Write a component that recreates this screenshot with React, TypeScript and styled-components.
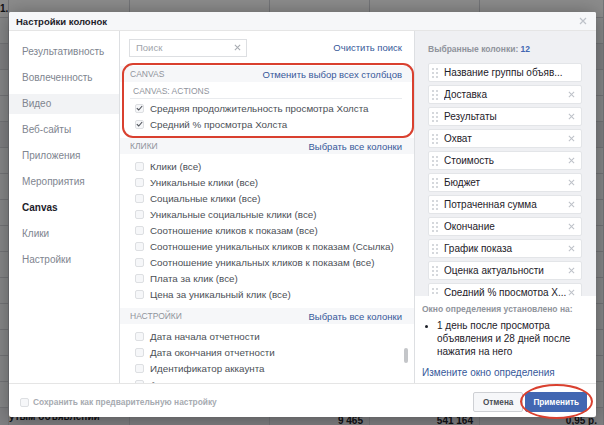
import React from 'react';
import styled, { createGlobalStyle } from 'styled-components';

const GlobalStyle = createGlobalStyle`
  html, body {
    margin: 0;
    padding: 0;
  }
  body {
    font-family: "Liberation Sans", Arial, sans-serif;
    overflow: hidden;
  }
  * {
    box-sizing: border-box;
  }
`;

const Page = styled.div`
  position: relative;
  width: 604px;
  height: 425px;
  overflow: hidden;
  background: #f6f7f9;
`;

/* --- the ads table that sits behind the dialog --- */

const BackTable = styled.div`
  display: flex;
  flex-direction: column;
`;

const BackRow = styled.div<{ $tone?: 'head' | 'dark' | 'light' }>`
  display: grid;
  grid-template-columns: 9px 121px 140px 100px 110px 124px;
  height: ${(p) => (p.$tone === 'head' ? 18 : 26)}px;
  align-items: center;
  border-bottom: 1px solid #d3d6db;
  background: ${(p) =>
    p.$tone === 'head' ? '#ffffff' : p.$tone === 'dark' ? '#e9ebee' : '#f6f7f9'};
  font-size: 10px;
  font-weight: bold;
  color: #1d2129;
`;

const BackCell = styled.div<{ $right?: boolean }>`
  padding: 0 ${(p) => (p.$right ? 6 : 0)}px;
  white-space: nowrap;
  overflow: hidden;
  text-align: ${(p) => (p.$right ? 'right' : 'left')};
  border-right: 1px solid #d3d6db;
  height: 100%;
  line-height: ${(p) => (p.$right ? 26 : 17)}px;
`;

const Dim = styled.div`
  position: absolute;
  inset: 0;
  background: rgba(0, 0, 0, 0.45);
`;

/* --- dialog --- */

const Modal = styled.div`
  position: absolute;
  left: 9px;
  top: 12px;
  width: 587px;
  height: 405px;
  background: #fff;
  display: flex;
  flex-direction: column;
  border-radius: 2px;
  box-shadow: 0 2px 20px rgba(0, 0, 0, 0.35);
`;

const Header = styled.div`
  flex: none;
  height: 19px;
  display: flex;
  align-items: center;
  justify-content: space-between;
  padding: 0 9px 0 7px;
  background: #f6f7f9;
  border-bottom: 1px solid #e5e5e5;
  border-radius: 2px 2px 0 0;
`;

const Title = styled.div`
  font-size: 9.5px;
  font-weight: bold;
  color: #1d2129;
`;

const Body = styled.div`
  flex: 1;
  min-height: 0;
  display: flex;
`;

const Sidebar = styled.div`
  flex: none;
  width: 111px;
  border-right: 1px solid #dddfe2;
  padding-top: 11px;
  display: flex;
  flex-direction: column;
  gap: 6px;
`;

const NavItem = styled.div<{ $active?: boolean; $hover?: boolean }>`
  height: 20px;
  line-height: 20px;
  padding-left: 13px;
  font-size: 10px;
  color: ${(p) => (p.$active ? '#1d2129' : '#80858f')};
  font-weight: ${(p) => (p.$active ? 'bold' : 'normal')};
  background: ${(p) => (p.$hover ? '#f2f3f5' : 'transparent')};
`;

const Middle = styled.div`
  position: relative;
  flex: none;
  width: 295px;
  overflow: hidden;
  border-right: 1px solid #dddfe2;
`;

const SearchRow = styled.div`
  height: 33px;
  display: flex;
  align-items: center;
  justify-content: space-between;
  padding: 0 12px 0 9px;
`;

const SearchBox = styled.div`
  width: 118px;
  height: 18px;
  border: 1px solid #dddfe2;
  display: flex;
  align-items: center;
  justify-content: space-between;
  padding: 0 5px 0 6px;
  font-size: 9.5px;
  color: #a0a4ab;
`;

const Link = styled.span<{ $size?: number }>`
  font-size: ${(p) => p.$size || 9.5}px;
  color: #365899;
  white-space: nowrap;
`;

const Section = styled.div<{ $marked?: boolean }>`
  position: relative;
  margin-top: 2px;
  padding-bottom: 4px;

  ${(p) =>
    p.$marked &&
    `
    &::after {
      content: '';
      position: absolute;
      left: 2px;
      right: 0px;
      top: -3px;
      bottom: -2px;
      border: 2px solid #d9402f;
      border-radius: 11px;
      pointer-events: none;
    }
  `}
`;

const SectionHead = styled.div`
  height: 16px;
  display: flex;
  align-items: center;
  justify-content: space-between;
  padding: 0 12px 0 10px;
  background: #f6f7f9;
`;

const SectionLabel = styled.span`
  font-size: 8.5px;
  color: #90949c;
  text-transform: uppercase;
`;

const SubHead = styled.div`
  height: 16px;
  display: flex;
  align-items: center;
  margin: 1px 12px 1px 10px;
  padding-left: 3px;
  border-bottom: 1px solid #e9ebee;
  font-size: 8.5px;
  color: #90949c;
`;

const Items = styled.div`
  padding-top: 4px;
  display: flex;
  flex-direction: column;
`;

const CheckRow = styled.div`
  height: 16px;
  display: flex;
  align-items: center;
  gap: 6px;
  padding-left: 15px;
  font-size: 9.8px;
  color: #4b4f56;
  white-space: nowrap;
`;

const Box = styled.span`
  flex: none;
  width: 9px;
  height: 9px;
  border: 1px solid #dddfe2;
  border-radius: 2px;
  background: #f6f7f9;
  display: flex;
  align-items: center;
  justify-content: center;
`;

const ScrollThumb = styled.div`
  position: absolute;
  right: 6px;
  top: 317px;
  width: 4px;
  height: 15px;
  border-radius: 2px;
  background: #c4c6c9;
`;

const Right = styled.div`
  flex: 1;
  display: flex;
  flex-direction: column;
  min-width: 0;
`;

const Chosen = styled.div`
  flex: none;
  height: 265px;
  overflow: hidden;
  background: #eff0f3;
  padding: 12px 14px 0 13px;
`;

const ChosenLabel = styled.div`
  font-size: 8.5px;
  font-weight: bold;
  color: #90949c;
  height: 12px;
  line-height: 12px;
  margin-bottom: 8px;

  b {
    color: #4267b2;
  }
`;

const ChosenList = styled.div`
  display: flex;
  flex-direction: column;
  gap: 3px;
`;

const ChosenItem = styled.div`
  height: 19px;
  flex: none;
  display: flex;
  align-items: center;
  background: #fff;
  border: 1px solid #e3e5e8;
  border-radius: 2px;
  padding: 0 6px 0 3px;
  font-size: 10px;
  color: #1d2129;
`;

const Handle = styled.svg`
  flex: none;
  width: 6px;
  height: 10px;
  margin-right: 6px;
`;

const ChosenText = styled.span`
  flex: 1;
  min-width: 0;
  overflow: hidden;
  white-space: nowrap;
  text-overflow: ellipsis;
`;

const Info = styled.div`
  flex: 1;
  padding: 8px 10px 0 7px;
  background: #fff;
`;

const InfoLabel = styled.div`
  font-size: 8.5px;
  font-weight: bold;
  color: #90949c;
  margin-bottom: 5px;
`;

const InfoList = styled.ul`
  margin: 0 0 4px;
  padding-left: 15px;
  font-size: 10px;
  line-height: 13px;
  color: #1d2129;

  li::marker {
    font-size: 9px;
  }
`;

const Footer = styled.div`
  flex: none;
  height: 34px;
  border-top: 1px solid #e5e5e5;
  display: flex;
  align-items: center;
  justify-content: space-between;
  padding: 3px 9px 0 11px;
`;

const SaveAsPreset = styled.div`
  display: flex;
  align-items: center;
  gap: 4px;
  font-size: 8.4px;
  font-weight: bold;
  color: #a7abb1;
`;

const Buttons = styled.div`
  display: flex;
  gap: 2px;
`;

const Button = styled.div<{ $primary?: boolean }>`
  position: relative;
  height: 20px;
  padding: 0 ${(p) => (p.$primary ? 7 : 9)}px;
  display: flex;
  align-items: center;
  border-radius: 2px;
  font-size: 8.2px;
  font-weight: bold;
  border: 1px solid ${(p) => (p.$primary ? '#4267b2' : '#ced0d4')};
  background: ${(p) => (p.$primary ? '#4267b2' : '#f6f7f9')};
  color: ${(p) => (p.$primary ? '#fff' : '#4b4f56')};

  ${(p) =>
    p.$primary &&
    `
    &::after {
      content: '';
      position: absolute;
      left: -6px;
      right: -7px;
      top: -9px;
      bottom: -8px;
      border: 2.5px solid #d9402f;
      border-radius: 50%;
      pointer-events: none;
    }
  `}
`;

const Cross: React.FC<{ size?: number; color?: string }> = ({ size = 7, color = '#bec2c9' }) => (
  <svg width={size} height={size} viewBox="0 0 8 8">
    <path d="M1 1L7 7M7 1L1 7" stroke={color} strokeWidth="1.2" />
  </svg>
);

const Tick = () => (
  <svg width="7" height="6" viewBox="0 0 7 6">
    <path d="M0.8 3.2L2.7 5L6.2 1" stroke="#4b4f56" strokeWidth="1.1" fill="none" />
  </svg>
);

const Checkbox: React.FC<{ checked?: boolean }> = ({ checked }) => (
  <Box>{checked && <Tick />}</Box>
);

const DragDots = () => (
  <Handle viewBox="0 0 6 10">
    {[0, 4, 8].map((y) =>
      [0, 4].map((x) => <rect key={`${x}-${y}`} x={x} y={y} width="2" height="2" fill="#d5d8dc" />)
    )}
  </Handle>
);

const sideNav = [
  'Результативность',
  'Вовлеченность',
  'Видео',
  'Веб-сайты',
  'Приложения',
  'Мероприятия',
  'Canvas',
  'Клики',
  'Настройки'
];

const clicks = [
  'Клики (все)',
  'Уникальные клики (все)',
  'Социальные клики (все)',
  'Уникальные социальные клики (все)',
  'Соотношение кликов к показам (все)',
  'Соотношение уникальных кликов к показам (Ссылка)',
  'Соотношение уникальных кликов к показам (все)',
  'Плата за клик (все)',
  'Цена за уникальный клик (все)'
];

const settings = [
  'Дата начала отчетности',
  'Дата окончания отчетности',
  'Идентификатор аккаунта',
  'Аккаунт'
];

// names as the panel shows them, already shortened
const chosen = [
  'Название группы объяв...',
  'Доставка',
  'Результаты',
  'Охват',
  'Стоимость',
  'Бюджет',
  'Потраченная сумма',
  'Окончание',
  'График показа',
  'Оценка актуальности',
  'Средний % просмотра Х...'
];

const backRows: { tone: 'head' | 'dark' | 'light'; cells: string[] }[] = [
  { tone: 'head', cells: ['1.', '', '', '', '', ''] },
  { tone: 'light', cells: ['', '', '', '', '', ''] },
  { tone: 'dark', cells: ['', '', '', '', '', ''] },
  { tone: 'light', cells: ['', '', '', '', '', ''] },
  { tone: 'light', cells: ['', '', '', '', '', ''] },
  { tone: 'dark', cells: ['', '', '', '', '', ''] },
  { tone: 'light', cells: ['', '', '', '', '', ''] },
  { tone: 'light', cells: ['', '', '', '', '', ''] },
  { tone: 'light', cells: ['', '', '', '', '', ''] },
  { tone: 'light', cells: ['', '', '', '', '', ''] },
  { tone: 'light', cells: ['', '', '', '', '', ''] },
  { tone: 'light', cells: ['', '', '', '', '', ''] },
  { tone: 'light', cells: ['', '', '', '', '', ''] },
  { tone: 'light', cells: ['', '', '', '', '', ''] },
  { tone: 'light', cells: ['', '', '', '', '', ''] },
  { tone: 'light', cells: ['', '', '', '', '', ''] },
  { tone: 'dark', cells: ['', 'утым объявлений', '', '9 465', '541 164', '0,95 р.'] }
];

const App: React.FC = () => {
  return (
    <>
      <GlobalStyle />
      <Page>
        <BackTable>
          {backRows.map((row, i) => (
            <BackRow key={i} $tone={row.tone}>
              {row.cells.map((c, j) => (
                <BackCell key={j} $right={j > 2}>
                  {c}
                </BackCell>
              ))}
            </BackRow>
          ))}
        </BackTable>
        <Dim />

        <Modal>
          <Header>
            <Title>Настройки колонок</Title>
            <Cross size={8} color="#bec2c9" />
          </Header>

          <Body>
            <Sidebar>
              {sideNav.map((name) => (
                <NavItem key={name} $active={name === 'Canvas'} $hover={name === 'Видео'}>
                  {name}
                </NavItem>
              ))}
            </Sidebar>

            <Middle>
              <SearchRow>
                <SearchBox>
                  <span>Поиск</span>
                  <Cross size={7} color="#a7abb1" />
                </SearchBox>
                <Link>Очистить поиск</Link>
              </SearchRow>

              <Section $marked>
                <SectionHead>
                  <SectionLabel>Canvas</SectionLabel>
                  <Link>Отменить выбор всех столбцов</Link>
                </SectionHead>
                <SubHead>CANVAS: ACTIONS</SubHead>
                <CheckRow>
                  <Checkbox checked />
                  Средняя продолжительность просмотра Холста
                </CheckRow>
                <CheckRow>
                  <Checkbox checked />
                  Средний % просмотра Холста
                </CheckRow>
              </Section>

              <Section>
                <SectionHead>
                  <SectionLabel>Клики</SectionLabel>
                  <Link>Выбрать все колонки</Link>
                </SectionHead>
                <Items>
                  {clicks.map((c) => (
                    <CheckRow key={c}>
                      <Checkbox />
                      {c}
                    </CheckRow>
                  ))}
                </Items>
              </Section>

              <Section>
                <SectionHead>
                  <SectionLabel>Настройки</SectionLabel>
                  <Link>Выбрать все колонки</Link>
                </SectionHead>
                <Items>
                  {settings.map((c) => (
                    <CheckRow key={c}>
                      <Checkbox />
                      {c}
                    </CheckRow>
                  ))}
                </Items>
              </Section>

              <ScrollThumb />
            </Middle>

            <Right>
              <Chosen>
                <ChosenLabel>
                  Выбранные колонки: <b>12</b>
                </ChosenLabel>
                <ChosenList>
                  {chosen.map((c, i) => (
                    <ChosenItem key={c}>
                      <DragDots />
                      <ChosenText>{c}</ChosenText>
                      {i > 0 && <Cross size={7} />}
                    </ChosenItem>
                  ))}
                </ChosenList>
              </Chosen>
              <Info>
                <InfoLabel>Окно определения установлено на:</InfoLabel>
                <InfoList>
                  <li>1 день после просмотра объявления и 28 дней после нажатия на него</li>
                </InfoList>
                <Link $size={10}>Измените окно определения</Link>
              </Info>
            </Right>
          </Body>

          <Footer>
            <SaveAsPreset>
              <Checkbox />
              Сохранить как предварительную настройку
            </SaveAsPreset>
            <Buttons>
              <Button>Отмена</Button>
              <Button $primary>Применить</Button>
            </Buttons>
          </Footer>
        </Modal>
      </Page>
    </>
  );
};

export default App;
